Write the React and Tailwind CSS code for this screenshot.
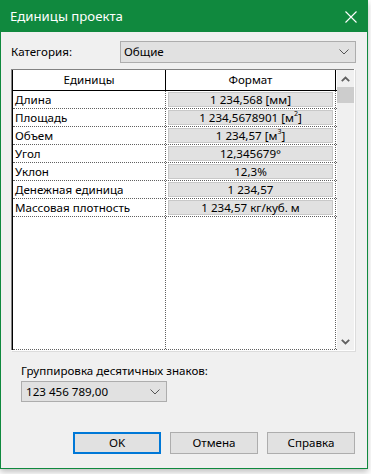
import React from 'react';

const rows = [
  ['Длина', <>1 234,568 [мм]</>],
  ['Площадь', <>1 234,5678901 [м<sup className="text-[7px] align-[5px]">2</sup>]</>],
  ['Объем', <>1 234,57 [м<sup className="text-[7px] align-[5px]">3</sup>]</>],
  ['Угол', <>12,345679°</>],
  ['Уклон', <>12,3%</>],
  ['Денежная единица', <>1 234,57</>],
  ['Массовая плотность', <>1 234,57 кг/куб. м</>],
];

const Chevron = ({ className = '' }) => (
  <svg width="10" height="6" viewBox="0 0 10 6" className={className}>
    <path d="M0.5 0.5 L5 5 L9.5 0.5" fill="none" stroke="#555" strokeWidth="1" />
  </svg>
);

const Btn = ({ children, primary }) => (
  <button
    className={`w-[88px] h-[22px] bg-[#e1e1e1] text-[11.6px] text-black ${
      primary ? 'border-2 border-[#0078d7]' : 'border border-[#adadad]'
    }`}
  >
    {children}
  </button>
);

export default function App() {
  return (
    <div className="w-[371px] h-[474px] bg-white" style={{ fontFamily: '"Noto Sans", "Liberation Sans", sans-serif' }}>
      <div className="w-[368px] h-[469px] border border-[#10893e] bg-[#f0f0f0] flex flex-col shadow-[0_3px_6px_rgba(0,0,0,0.25)]">
        {/* title bar */}
        <div className="h-[31px] bg-[#10893e] flex items-center justify-between pl-[9px] pr-[10px] text-white">
          <span className="text-[13.2px]">Единицы проекта</span>
          <svg width="12" height="12" viewBox="0 0 12 12">
            <path d="M0.5 0.5 L11.5 11.5 M11.5 0.5 L0.5 11.5" stroke="#fff" strokeWidth="1.1" />
          </svg>
        </div>

        <div className="flex-1 flex flex-col pl-[10px] pr-[11px] pt-[9px] text-[11.6px] text-black">
          {/* category */}
          <div className="flex items-center h-[22px]">
            <span className="w-[109px]">Категория:</span>
            <div className="flex-1 h-[22px] bg-[#e1e1e1] border border-[#adadad] flex items-center justify-between pl-[3px] pr-[6px]">
              <span>Общие</span>
              <Chevron />
            </div>
          </div>

          {/* table */}
          <div className="mt-[6px] w-[344px] h-[282px] border-r border-b border-[#fdfdfd] shadow-[1px_1px_0_#dcdcdc]">
            <div className="h-full flex border-l border-t border-[#828282]">
              <div className="flex-1 flex flex-col bg-white border-l border-black">
                <div className="flex h-[21px] border-b border-black">
                  <div className="w-[153px] border-r border-black flex items-center justify-center">Единицы</div>
                  <div className="w-[170px] border-r border-black flex items-center justify-center">Формат</div>
                </div>
                {rows.map(([name, fmt], i) => (
                  <div key={i} className="flex h-[18px] border-b border-dotted border-[#606060]">
                    <div className="w-[153px] border-r border-dotted border-[#606060] pl-[2px] leading-[17px] whitespace-nowrap">{name}</div>
                    <div className="w-[170px] border-r border-dotted border-[#606060] px-[2px] py-[1px]">
                      <div className="h-full bg-[#e1e1e1] border border-[#c8c8c8] flex items-center justify-center leading-none whitespace-nowrap">
                        {fmt}
                      </div>
                    </div>
                  </div>
                ))}
                <div className="flex-1 flex border-b border-dotted border-[#606060]">
                  <div className="w-[153px] border-r border-dotted border-[#606060]" />
                  <div className="w-[170px] border-r border-dotted border-[#606060]" />
                </div>
              </div>
              {/* scrollbar */}
              <div className="w-[17px] bg-[#f0f0f0] flex flex-col">
                <div className="h-[17px] flex items-center justify-center">
                  <svg width="9" height="6" viewBox="0 0 9 6">
                    <path d="M0.8 5.2 L4.5 1.5 L8.2 5.2" fill="none" stroke="#606060" strokeWidth="1.8" />
                  </svg>
                </div>
                <div className="h-[16px] bg-[#cdcdcd]" />
                <div className="flex-1" />
                <div className="h-[17px] flex items-center justify-center">
                  <svg width="9" height="6" viewBox="0 0 9 6">
                    <path d="M0.8 0.8 L4.5 4.5 L8.2 0.8" fill="none" stroke="#606060" strokeWidth="1.8" />
                  </svg>
                </div>
              </div>
            </div>
          </div>

          {/* grouping */}
          <div className="pl-[10px] mt-[13px] leading-[14px]">Группировка десятичных знаков:</div>
          <div className="ml-[10px] mt-[3px] w-[146px] h-[21px] bg-[#e1e1e1] border border-[#adadad] flex items-center justify-between pl-[4px] pr-[6px]">
            <span>123 456 789,00</span>
            <Chevron />
          </div>

          {/* buttons */}
          <div className="mt-[30px] flex justify-end gap-[9px] pr-[1px]">
            <Btn primary>OK</Btn>
            <Btn>Отмена</Btn>
            <Btn>Справка</Btn>
          </div>
        </div>
      </div>
    </div>
  );
}
